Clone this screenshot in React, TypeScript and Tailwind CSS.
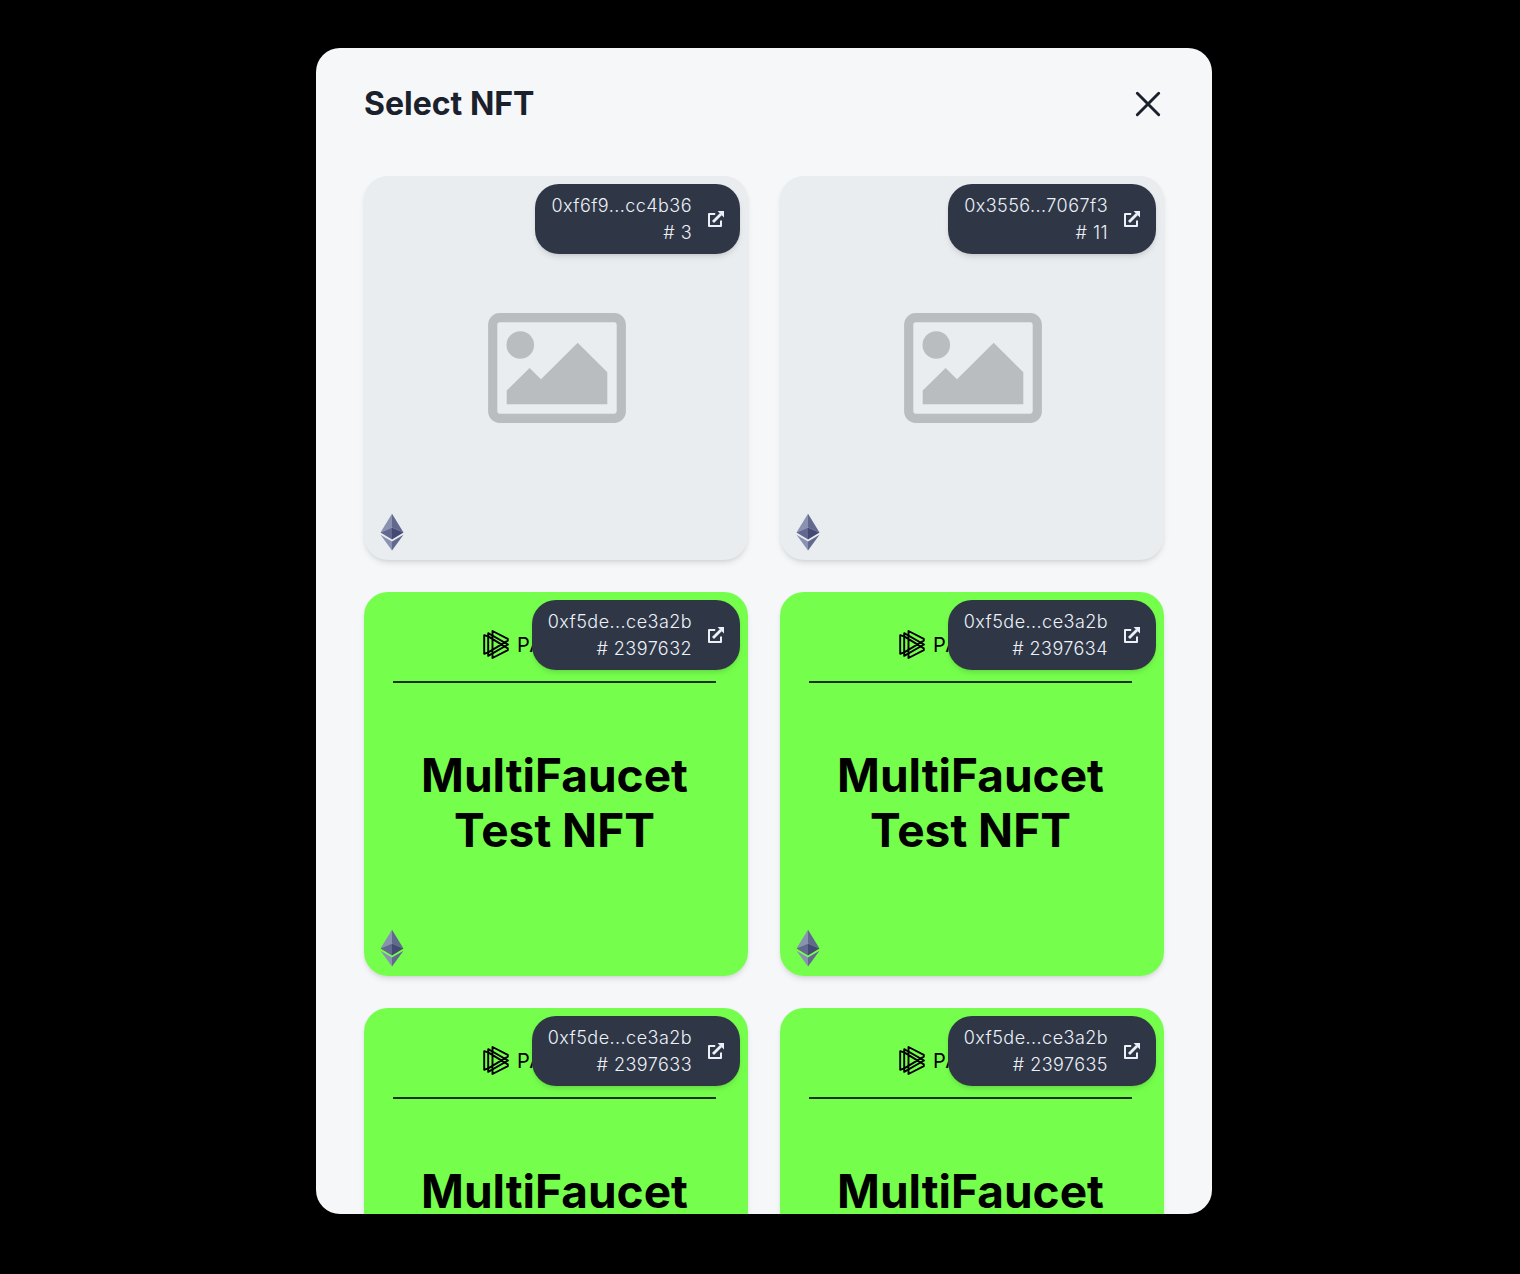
import React from "react";

type Nft = { address: string; id: string; art: boolean };

const nfts: Nft[] = [
  { address: "0xf6f9...cc4b36", id: "3", art: false },
  { address: "0x3556...7067f3", id: "11", art: false },
  { address: "0xf5de...ce3a2b", id: "2397632", art: true },
  { address: "0xf5de...ce3a2b", id: "2397634", art: true },
  { address: "0xf5de...ce3a2b", id: "2397633", art: true },
  { address: "0xf5de...ce3a2b", id: "2397635", art: true },
];

function CloseIcon() {
  return (
    <svg viewBox="0 0 26 26" className="size-[26px]" fill="none" stroke="currentColor" strokeWidth="2.9" strokeLinecap="round" aria-hidden="true">
      <path d="M2.3 2.3 23.7 23.7M23.7 2.3 2.3 23.7" />
    </svg>
  );
}

function ExternalIcon() {
  return (
    <svg viewBox="0 0 16 16" className="size-4 shrink-0" aria-hidden="true">
      <path d="M7.2 3H1V15H13V9.6" fill="none" stroke="currentColor" strokeWidth="2" strokeLinejoin="round" />
      <path d="M5 11 13 3" fill="none" stroke="currentColor" strokeWidth="2.8" />
      <path d="M9.6 0H16V6.4Z" fill="currentColor" />
    </svg>
  );
}

function PlaceholderIcon() {
  return (
    <svg viewBox="0 0 138 110" className="w-[138px]" aria-hidden="true">
      <rect x="4.7" y="4.7" width="128.6" height="100.6" rx="7" fill="none" stroke="#b9bdc0" strokeWidth="9.2" />
      <circle cx="32.3" cy="32" r="13.8" fill="#b9bdc0" />
      <path d="M18.7 91.3V77.5L41.6 55 53 66.3 89.7 29.7 119.3 59.2V91.3Z" fill="#b9bdc0" />
    </svg>
  );
}

function EthereumIcon() {
  return (
    <svg viewBox="0 1 24 38" className="absolute bottom-2 left-4 h-[38px] w-6" aria-hidden="true">
      <path d="M12 .7 .5 19.6 12 14.4Z" fill="#8a92b2" />
      <path d="M12 .7 23.5 19.6 12 14.4Z" fill="#62688f" />
      <path d="M12 14.4.5 19.6 12 26.4Z" fill="#62688f" />
      <path d="M12 14.4 23.5 19.6 12 26.4Z" fill="#454a75" />
      <path d="M.5 21.8 12 28.5V37.6Z" fill="#8a92b2" />
      <path d="M23.5 21.8 12 28.5V37.6Z" fill="#62688f" />
    </svg>
  );
}

function ParadigmLogo() {
  return (
    <svg viewBox="0 0 26 29" className="h-[29px] w-[26px] shrink-0" fill="none" stroke="black" strokeWidth="1.9" strokeLinejoin="round" aria-hidden="true">
      <path d="M9.5 1 24.8 8.8V10.6L5.2 22.4 1.2 23.8V5.2L5.2 6.4 24.8 18.4V20.2L9.5 28Z" />
      <path d="M5.2 3.2V25.9L25 14.5Z" />
    </svg>
  );
}

function Artwork() {
  return (
    <div className="flex h-full flex-col bg-[#75ff4c] pr-8 pl-[29px] text-black">
      <div className="flex h-[91px] items-center gap-2 border-b-2 border-black/80 pt-4 pl-[90px]">
        <ParadigmLogo />
        <span className="text-xl leading-7 tracking-wider">PA</span>
      </div>
      <div className="pt-[65px] text-center text-[46px] leading-[55px] font-bold">
        MultiFaucet
        <br />
        Test NFT
      </div>
    </div>
  );
}

function NftCard({ nft }: { nft: Nft }) {
  return (
    <li className="relative aspect-square overflow-hidden rounded-3xl bg-[#e9edf0] shadow-md">
      {nft.art ? (
        <Artwork />
      ) : (
        <div className="flex h-full items-center justify-center pl-0.5">
          <PlaceholderIcon />
        </div>
      )}
      <a
        href="#"
        className="absolute top-2 right-2 flex items-center gap-4 rounded-3xl bg-[#2f3747] px-4 py-2 text-right text-lg leading-[27px] font-light tracking-wide text-[#edf1f7] shadow-md"
      >
        <span>
          {nft.address}
          <br /># {nft.id}
        </span>
        <ExternalIcon />
      </a>
      <EthereumIcon />
    </li>
  );
}

export default function App() {
  return (
    <div className="flex h-screen justify-center bg-black pt-12 pb-[60px] pl-2 font-[Inter,sans-serif]">
      <section role="dialog" aria-labelledby="title" className="w-full max-w-4xl overflow-hidden rounded-3xl bg-[#f6f7f9] px-12 text-[#1a202c]">
        <header className="flex items-center justify-between pt-8 pb-12">
          <h1 id="title" className="text-[32px] leading-[48px] font-bold">Select NFT</h1>
          <button type="button" aria-label="Close" className="px-[3px]">
            <CloseIcon />
          </button>
        </header>
        <ul className="grid grid-cols-2 gap-8">
          {nfts.map((nft) => (
            <NftCard key={nft.id} nft={nft} />
          ))}
        </ul>
      </section>
    </div>
  );
}
